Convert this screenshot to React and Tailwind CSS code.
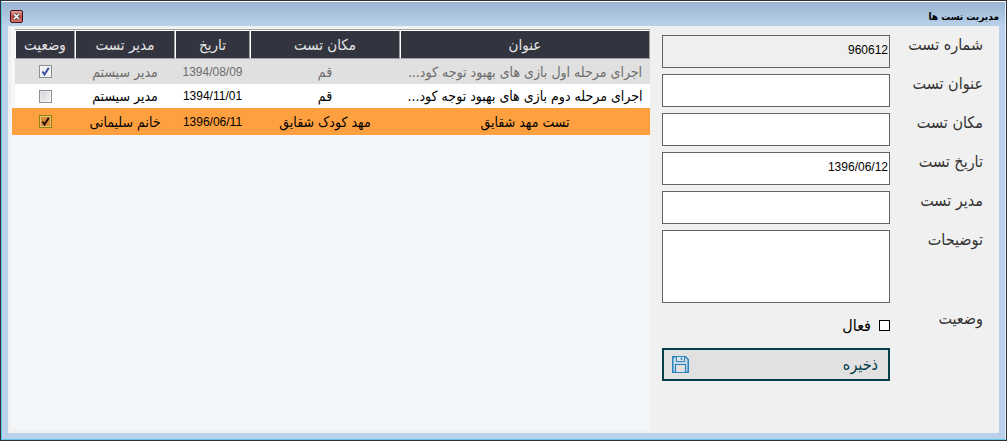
import { useState } from "react";

const columns = ["عنوان", "مکان تست", "تاریخ", "مدیر تست", "وضعیت"];

const tests = [
  { title: "اجرای مرحله اول بازی های بهبود توجه کود...", place: "قم", date: "1394/08/09", manager: "مدیر سیستم", active: true, row: "h-[25px] bg-[#e0e0e0] text-[#6d6d6d]", box: "border-[#8e8f8f] bg-[#eef0f3]", tick: "#3b4f9b" },
  { title: "اجرای مرحله دوم بازی های بهبود توجه کود...", place: "قم", date: "1394/11/01", manager: "مدیر سیستم", active: false, row: "h-6 bg-white text-black", box: "border-[#8e8f8f] bg-linear-to-br from-[#cfd3d8] to-[#f6f6f6]", tick: "#3b4f9b" },
  { title: "تست مهد شقایق", place: "مهد کودک شقایق", date: "1396/06/11", manager: "خانم سلیمانی", active: true, row: "h-[27px] bg-[#ffa040] text-black shadow-[-3px_0_0_#ffa040]", box: "border-[#8e8400] bg-[#d99033]", tick: "#2a0d08" },
];

const fields = [
  { id: "number", label: "شماره تست", value: "960612", readOnly: true },
  { id: "title", label: "عنوان تست", value: "" },
  { id: "place", label: "مکان تست", value: "" },
  { id: "date", label: "تاریخ تست", value: "1396/06/12" },
  { id: "manager", label: "مدیر تست", value: "" },
];

function StatusBox({ test }) {
  const [checked, setChecked] = useState(test.active);
  return (
    <label className="relative mx-auto block size-[13px]">
      <input
        type="checkbox"
        aria-label={"وضعیت " + test.title}
        checked={checked}
        onChange={(e) => setChecked(e.target.checked)}
        className={"block size-[13px] appearance-none border shadow-[inset_0_0_0_1px_#ffffff66] " + test.box}
      />
      {checked && (
        <svg viewBox="0 0 13 13" className="pointer-events-none absolute inset-0 size-[13px]" fill="none" stroke={test.tick} strokeWidth="2">
          <path d="M3.5 6.5 L5.5 9.5 L9.8 2.8" />
        </svg>
      )}
    </label>
  );
}

function TestTable() {
  return (
    <section className="min-w-0 flex-1 bg-[#f4f7fa] pt-px pl-1">
      <table className="w-full table-fixed border-separate border-spacing-0 border-t border-[#a0a0a0] text-center">
        <colgroup>
          <col />
          <col className="w-[150px]" />
          <col className="w-[75px]" />
          <col className="w-[100px]" />
          <col className="w-[60px]" />
        </colgroup>
        <thead>
          <tr className="h-[29px] bg-[#323540] text-[15px] text-[#e6e6e6]">
            {columns.map((name) => (
              <th key={name} className="border border-t-white border-r-[#a0a0a0] border-b-[#a0a0a0] border-l-white p-0 font-normal leading-5">
                {name}
              </th>
            ))}
          </tr>
        </thead>
        <tbody className="text-[14px] leading-5">
          {tests.map((test) => (
            <tr key={test.date} className={test.row}>
              <td className="overflow-hidden px-1 py-0 whitespace-nowrap">{test.title}</td>
              <td className="p-0 whitespace-nowrap">{test.place}</td>
              <td className="p-0 font-['Liberation_Sans',sans-serif] text-[12px]">{test.date}</td>
              <td className="p-0 whitespace-nowrap">{test.manager}</td>
              <td className="p-0"><StatusBox test={test} /></td>
            </tr>
          ))}
        </tbody>
      </table>
    </section>
  );
}

function SaveIcon() {
  return (
    <svg viewBox="0 0 17 17" className="size-[17px]" fill="none" stroke="#2b83bd">
      <path d="M.75 .75 H13.5 L16.25 3.5 V16.25 H.75 Z" fill="#c5dae8" strokeWidth="1.5" />
      <path d="M4.5 1 V5.5 H12.5 V1" fill="#dfe5ea" strokeWidth="1" />
      <path d="M9.5 1.5 V4" strokeWidth="1.5" />
      <path d="M3.5 16 V8.5 H13.5 V16" fill="#e1e1e1" strokeWidth="1.2" />
    </svg>
  );
}

function TestForm() {
  const labelClass = "w-[93px] shrink-0 leading-5 text-[#333]";
  return (
    <form onSubmit={(e) => e.preventDefault()} className="flex w-[349px] shrink-0 flex-col gap-1.5 pt-[9px] pr-4 pl-3 text-[16px]">
      {fields.map((field) => (
        <div key={field.id} className="flex">
          <label htmlFor={field.id} className={labelClass}>{field.label}</label>
          <input
            id={field.id}
            type="text"
            defaultValue={field.value}
            readOnly={field.readOnly}
            className="h-[33px] min-w-0 flex-1 border border-[#646464] bg-white px-px pb-1 font-['Liberation_Sans',sans-serif] text-[12px] text-black read-only:bg-[#efefef]"
          />
        </div>
      ))}
      <div className="flex">
        <label htmlFor="notes" className={labelClass}>توضیحات</label>
        <textarea id="notes" className="h-[73px] min-w-0 flex-1 resize-none border border-[#646464] bg-white p-1 text-[12px]" />
      </div>
      <div className="flex h-[33px]">
        <span className={labelClass}>وضعیت</span>
        <label className="flex items-center gap-2 text-black">
          <input type="checkbox" className="size-[11px] appearance-none border border-black bg-white checked:bg-black" />
          فعال
        </label>
      </div>
      <button type="submit" className="mr-[93px] flex h-[33px] items-center justify-between border-2 border-[#043e49] bg-[#e1e1e1] pr-2.5 pl-2 text-[#043e49]">
        ذخیره
        <SaveIcon />
      </button>
    </form>
  );
}

export default function App() {
  return (
    <div dir="rtl" className="flex min-h-screen flex-col border border-[#302d33] bg-[#b9d1ea] font-['DejaVu_Sans_Condensed','DejaVu_Sans',sans-serif]">
      <div className="flex flex-1 flex-col border border-t-white border-r-[#e4f1fa] border-b-[#62c8e8] border-l-[#62c8e8]">
        <header className="flex h-6 items-center justify-between bg-linear-to-b from-[#99b4d1] to-[#b9d1ea] pt-1 pr-1.5 pl-2">
          <h1 className="text-[10px] font-bold text-black">مدیریت تست ها</h1>
          <button type="button" aria-label="بستن" className="flex size-[13px] items-center justify-center rounded-xs border border-[#4a1020] bg-linear-to-b from-[#e0a09a] via-[#b84a40] to-[#d0776a]">
            <svg viewBox="0 0 9 9" className="size-[9px]" fill="none">
              <path d="M2 2 L7 7 M7 2 L2 7" stroke="#50404a" strokeWidth="3" />
              <path d="M2 2 L7 7 M7 2 L2 7" stroke="#fff" strokeWidth="1.6" />
            </svg>
          </button>
        </header>
        <main className="mx-1.5 mb-1.5 flex flex-1 flex-row bg-[#f0f0f0]">
          <TestForm />
          <div className="flex min-w-0 flex-1 pt-0.5 pb-[3px] pl-[3px]">
            <TestTable />
          </div>
        </main>
      </div>
    </div>
  );
}
